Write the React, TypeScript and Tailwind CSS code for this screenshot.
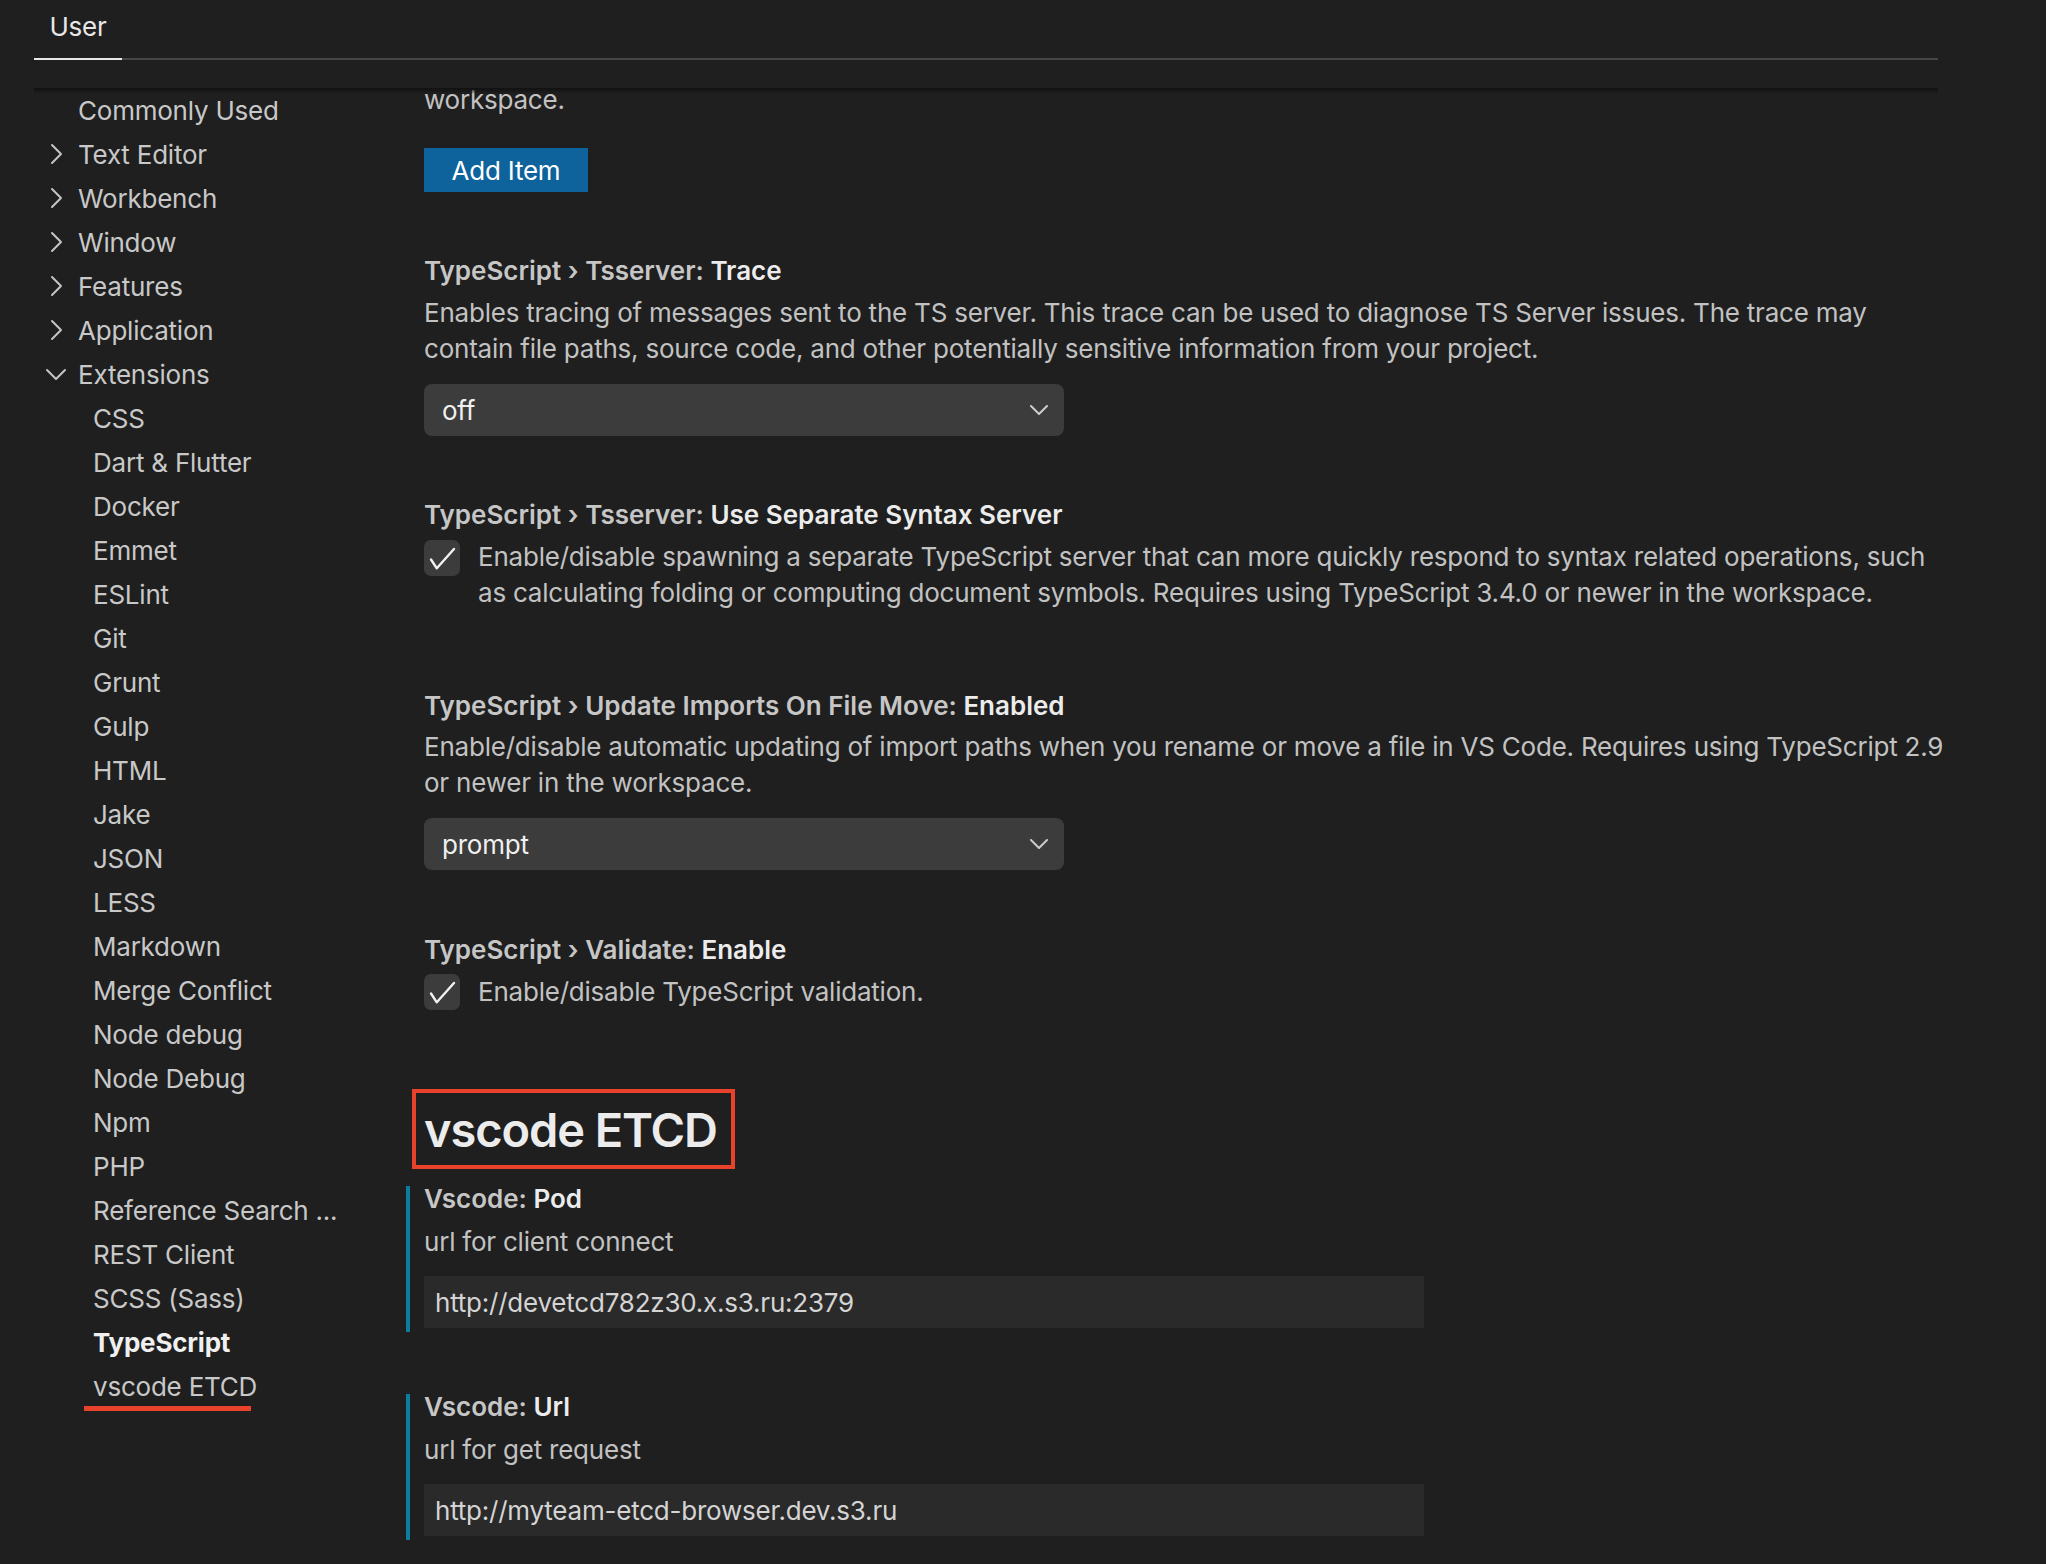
import React from 'react';

const font = { fontFamily: 'Inter, "Noto Sans", sans-serif' };

type NavItem = { label: string; level: 0 | 1; chevron?: 'right' | 'down'; active?: boolean; marked?: boolean };

const nav: NavItem[] = [
  { label: 'Commonly Used', level: 0 },
  { label: 'Text Editor', level: 0, chevron: 'right' },
  { label: 'Workbench', level: 0, chevron: 'right' },
  { label: 'Window', level: 0, chevron: 'right' },
  { label: 'Features', level: 0, chevron: 'right' },
  { label: 'Application', level: 0, chevron: 'right' },
  { label: 'Extensions', level: 0, chevron: 'down' },
  { label: 'CSS', level: 1 },
  { label: 'Dart & Flutter', level: 1 },
  { label: 'Docker', level: 1 },
  { label: 'Emmet', level: 1 },
  { label: 'ESLint', level: 1 },
  { label: 'Git', level: 1 },
  { label: 'Grunt', level: 1 },
  { label: 'Gulp', level: 1 },
  { label: 'HTML', level: 1 },
  { label: 'Jake', level: 1 },
  { label: 'JSON', level: 1 },
  { label: 'LESS', level: 1 },
  { label: 'Markdown', level: 1 },
  { label: 'Merge Conflict', level: 1 },
  { label: 'Node debug', level: 1 },
  { label: 'Node Debug', level: 1 },
  { label: 'Npm', level: 1 },
  { label: 'PHP', level: 1 },
  { label: 'Reference Search ...', level: 1 },
  { label: 'REST Client', level: 1 },
  { label: 'SCSS (Sass)', level: 1 },
  { label: 'TypeScript', level: 1, active: true },
  { label: 'vscode ETCD', level: 1, marked: true },
];

function Chevron({ dir }: { dir: 'right' | 'down' }) {
  return (
    <svg width="32" height="32" viewBox="0 0 32 32" fill="none" stroke="#c5c5c5" strokeWidth="2" strokeLinecap="round" strokeLinejoin="round">
      {dir === 'right' ? <path d="M12 7l9 9-9 9" /> : <path d="M7 12l9 9 9-9" />}
    </svg>
  );
}

function SelectBox({ value }: { value: string }) {
  return (
    <div className="flex h-[52px] w-[640px] items-center justify-between rounded-[8px] bg-[#3c3c3c] pl-[18px] pr-[16px] text-[26px] text-[#f0f0f0]">
      <span>{value}</span>
      <svg width="18" height="10" viewBox="0 0 18 10" fill="none" stroke="#cccccc" strokeWidth="2" strokeLinecap="round" strokeLinejoin="round">
        <path d="M1 1l8 8 8-8" />
      </svg>
    </div>
  );
}

function Checkbox() {
  return (
    <div className="flex h-[36px] w-[36px] shrink-0 items-center justify-center rounded-[7px] bg-[#3c3c3c]">
      <svg width="36" height="36" viewBox="0 0 36 36" fill="none" stroke="#f2f2f2" strokeWidth="2.4" strokeLinecap="round" strokeLinejoin="round">
        <path d="M7 19.5l5.8 8.8L30 9" />
      </svg>
    </div>
  );
}

function Title({ cat, name }: { cat: string; name: string }) {
  return (
    <div className="whitespace-nowrap text-[26px] font-semibold leading-[36px] tracking-normal">
      <span className="text-[#c6c6c6]">{cat}</span>
      <span className="text-[#ececec]">{name}</span>
    </div>
  );
}

function Desc({ lines }: { lines: string[] }) {
  return (
    <div className="whitespace-nowrap text-[26px] leading-[36px] text-[#c2c2c2]">
      {lines.map((l) => (
        <div key={l}>{l}</div>
      ))}
    </div>
  );
}

function ModifiedItem({ cat, name, desc, value }: { cat: string; name: string; desc: string; value: string }) {
  return (
    <div className="-ml-[18px] border-l-4 border-[#0c7d9d] pb-[4px] pl-[14px]">
      <div className="whitespace-nowrap text-[26px] font-semibold leading-[26px] tracking-normal">
        <span className="text-[#c6c6c6]">{cat}</span>
        <span className="text-[#ececec]">{name}</span>
      </div>
      <div className="mt-[12px] text-[26px] leading-[36px] text-[#c2c2c2]">{desc}</div>
      <div className="mt-[16px] flex h-[52px] w-[1000px] items-center bg-[#2a2a2a] pl-[11px] text-[26px] text-[#d4d4d4]">
        {value}
      </div>
    </div>
  );
}

export default function App() {
  return (
    <div className="relative h-[1564px] w-[2046px] overflow-hidden bg-[#1f1f1f] tracking-[-0.22px]" style={font}>
      {/* tab header */}
      <div className="ml-[34px] flex h-[60px] w-[1904px] border-b-2 border-[#464646]">
        <div className="-mb-[2px] flex h-[60px] w-[88px] justify-center border-b-2 border-[#e7e7e7] pt-[9px] text-[26px] leading-[36px] text-[#e7e7e7]">
          User
        </div>
      </div>
      <div className="h-[28px]" />

      <div className="flex h-[1476px]">
        {/* sidebar */}
        <div className="ml-[34px] w-[372px] shrink-0">
          {nav.map((n) => (
            <div key={n.label} className="relative flex h-[44px] items-center">
              {n.level === 0 ? (
                <>
                  <div className="ml-[6px] flex h-[32px] w-[32px] items-center justify-center">
                    {n.chevron && <Chevron dir={n.chevron} />}
                  </div>
                  <span className="ml-[6px] whitespace-nowrap text-[26px] text-[#c8c8c8]">{n.label}</span>
                </>
              ) : (
                <span
                  className={`ml-[59px] whitespace-nowrap text-[26px] ${
                    n.active ? 'font-bold text-[#f0f0f0]' : 'text-[#c8c8c8]'
                  }`}
                >
                  {n.label}
                </span>
              )}
              {n.marked && <div className="absolute bottom-[-3px] left-[50px] h-[5px] w-[167px] bg-[#e8412c]" />}
            </div>
          ))}
        </div>

        {/* settings content */}
        <div className="flex-1 overflow-hidden pl-[18px]">
          <div className="-mt-[6px] text-[26px] leading-[36px] text-[#c2c2c2]">workspace.</div>
          <button className="mt-[30px] flex h-[44px] w-[164px] items-center justify-center bg-[#0e639c] text-[26px] text-white">
            Add Item
          </button>

          <div className="mt-[61px]">
            <Title cat="TypeScript › Tsserver: " name="Trace" />
            <div className="mt-[6px]">
              <Desc
                lines={[
                  'Enables tracing of messages sent to the TS server. This trace can be used to diagnose TS Server issues. The trace may',
                  'contain file paths, source code, and other potentially sensitive information from your project.',
                ]}
              />
            </div>
            <div className="mt-[17px]">
              <SelectBox value="off" />
            </div>
          </div>

          <div className="mt-[61px]">
            <Title cat="TypeScript › Tsserver: " name="Use Separate Syntax Server" />
            <div className="mt-[6px] flex items-start gap-[18px]">
              <div className="mt-[1px]">
                <Checkbox />
              </div>
              <Desc
                lines={[
                  'Enable/disable spawning a separate TypeScript server that can more quickly respond to syntax related operations, such',
                  'as calculating folding or computing document symbols. Requires using TypeScript 3.4.0 or newer in the workspace.',
                ]}
              />
            </div>
          </div>

          <div className="mt-[77px]">
            <Title cat="TypeScript › Update Imports On File Move: " name="Enabled" />
            <div className="mt-[5px]">
              <Desc
                lines={[
                  'Enable/disable automatic updating of import paths when you rename or move a file in VS Code. Requires using TypeScript 2.9',
                  'or newer in the workspace.',
                ]}
              />
            </div>
            <div className="mt-[17px]">
              <SelectBox value="prompt" />
            </div>
          </div>

          <div className="mt-[62px]">
            <Title cat="TypeScript › Validate: " name="Enable" />
            <div className="mt-[6px] flex items-start gap-[18px]">
              <Checkbox />
              <Desc lines={['Enable/disable TypeScript validation.']} />
            </div>
          </div>

          <div className="-ml-[12px] mt-[79px] flex h-[80px] w-[323px] items-center border-4 border-[#e8412c] pl-[8px]">
            <span className="whitespace-nowrap text-[47px] font-semibold leading-none tracking-[-1.1px] text-[#ececec]">
              vscode ETCD
            </span>
          </div>

          <div className="mt-[17px]">
            <ModifiedItem cat="Vscode: " name="Pod" desc="url for client connect" value="http://devetcd782z30.x.s3.ru:2379" />
          </div>
          <div className="mt-[62px]">
            <ModifiedItem cat="Vscode: " name="Url" desc="url for get request" value="http://myteam-etcd-browser.dev.s3.ru" />
          </div>
        </div>
      </div>

      {/* scroll shadow under header */}
      <div className="absolute left-[34px] top-[88px] h-[6px] w-[1904px] bg-gradient-to-b from-[#111111] to-transparent" />
    </div>
  );
}
